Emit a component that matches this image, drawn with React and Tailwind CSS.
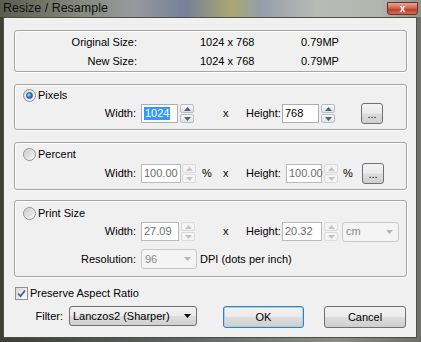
import React from "react";

const btnBg =
  "bg-[linear-gradient(#f2f2f2,#ebebeb_48%,#dddddd_52%,#cfcfcf)]";

function Radio({ checked }) {
  return (
    <span className="flex h-[13px] w-[13px] items-center justify-center rounded-full border border-[#8e8f8f] bg-gradient-to-br from-[#d8d8d8] to-[#fbfbfb]">
      {checked ? (
        <span className="h-[7px] w-[7px] rounded-full border border-[#1b4f8a] bg-[radial-gradient(circle_at_35%_35%,#9be6ff,#2a84d0_55%,#0d3f86)]" />
      ) : (
        <span className="h-[9px] w-[9px] rounded-full bg-gradient-to-br from-[#cbcbcb] to-[#f4f4f4]" />
      )}
    </span>
  );
}

function Spin({ disabled }) {
  const fill = disabled ? "#c4c4c4" : "#4d6185";
  const box = disabled
    ? "border-[#dadada] bg-[#f4f4f4]"
    : "border-[#b6bdc7] bg-gradient-to-b from-[#f8f8f8] to-[#e2e2e2]";
  return (
    <div className="flex w-[14px] flex-col gap-[1px]">
      <div className={`flex h-[9px] items-center justify-center rounded-[2px] border ${box}`}>
        <svg width="7" height="4" viewBox="0 0 7 4">
          <path d="M0 4L3.5 0L7 4Z" fill={fill} />
        </svg>
      </div>
      <div className={`flex h-[9px] items-center justify-center rounded-[2px] border ${box}`}>
        <svg width="7" height="4" viewBox="0 0 7 4">
          <path d="M0 0L3.5 4L7 0Z" fill={fill} />
        </svg>
      </div>
    </div>
  );
}

function Field({ value, w, disabled, selected }) {
  return (
    <div
      className={`flex h-[19px] items-center border bg-white pl-[2px] ${w} ${
        disabled ? "border-[#b9b9b9] text-[#6d6d6d]" : "border-[#abadb3]"
      }`}
    >
      {selected ? (
        <span className="bg-[#3399ff] px-[1px] leading-[13px] text-white">{value}</span>
      ) : (
        <span>{value}</span>
      )}
    </div>
  );
}

function Combo({ value, w, disabled }) {
  return (
    <div
      className={`flex h-[20px] items-center justify-between rounded-[3px] border pl-[3px] pr-[5px] ${w} ${
        disabled
          ? "border-[#c9c9c9] bg-[#f4f4f4] text-[#8a8a8a]"
          : "border-[#707070] " + btnBg
      }`}
    >
      <span>{value}</span>
      <svg width="7" height="4" viewBox="0 0 7 4">
        <path d="M0 0H7L3.5 4Z" fill={disabled ? "#b4b4b4" : "#000"} />
      </svg>
    </div>
  );
}

function Dots() {
  return (
    <div className={`ml-[26px] flex h-[21px] w-[22px] items-end justify-center rounded-[3px] border border-[#707070] pb-[3px] leading-none ${btnBg}`}>
      ...
    </div>
  );
}

const group =
  "w-[393px] rounded-[3px] border border-[#a5a5a5] shadow-[inset_1px_1px_0_#fff,1px_1px_0_#fff]";

export default function App() {
  return (
    <div className="h-[342px] w-[421px] overflow-hidden bg-[linear-gradient(90deg,#3e3f35,#5c6062_40%,#8a8c84_80%,#6e6f68)] font-['Liberation_Sans',Arial,sans-serif] text-[11px] text-black">
      {/* Title bar */}
      <div className="flex h-[17px] items-start justify-between bg-[linear-gradient(90deg,#5a5c50_0%,#84877a_18%,#979a9c_32%,#74809a_44%,#aaa870_55%,#959eaa_62%,#b8bbb6_75%,#b3b5af_90%,#90928c_100%)]">
        <span className="pl-[3px] pt-[1px] text-[12.5px] leading-[15px] text-[#101010]">
          Resize / Resample
        </span>
        <div className="mr-[3px] mt-[2px] flex h-[13px] w-[31px] items-center justify-center rounded-b-[3px] border border-[#6a3026] bg-[linear-gradient(#e8a89a,#cf5e4a_50%,#bb3a24_55%,#d46c55)] text-[10px] font-bold leading-none text-white">
          x
        </div>
      </div>

      {/* Client area */}
      <div className="ml-[3px] h-[321px] w-[414px] border border-[#4e4e46] bg-[#f0f0f0] pl-[10px] pt-[12px]">
        {/* Sizes */}
        <div className={`${group} pt-[1px]`}>
          <div className="flex h-[20px] items-center">
            <span className="w-[122px] text-right">Original Size:</span>
            <span className="ml-[63px] w-[101px]">1024 x 768</span>
            <span>0.79MP</span>
          </div>
          <div className="flex h-[19px] items-center">
            <span className="w-[122px] text-right">New Size:</span>
            <span className="ml-[63px] w-[101px]">1024 x 768</span>
            <span>0.79MP</span>
          </div>
        </div>

        {/* Pixels */}
        <div className={`${group} mt-[12px] pb-[6px] pt-[4px]`}>
          <div className="flex h-[13px] items-center pl-[8px]">
            <Radio checked />
            <span className="ml-[2px]">Pixels</span>
          </div>
          <div className="mt-[2px] flex h-[19px] items-center">
            <span className="w-[121px] text-right">Width:</span>
            <div className="ml-[5px]">
              <Field value="1024" w="w-[37px]" selected />
            </div>
            <div className="ml-[2px]">
              <Spin />
            </div>
            <span className="w-[52px] pl-[29px]">x</span>
            <span className="w-[36px]">Height:</span>
            <Field value="768" w="w-[37px]" />
            <div className="ml-[2px]">
              <Spin />
            </div>
            <Dots />
          </div>
        </div>

        {/* Percent */}
        <div className={`${group} mt-[12px] pb-[6px] pt-[5px]`}>
          <div className="flex h-[13px] items-center pl-[8px]">
            <Radio />
            <span className="ml-[2px]">Percent</span>
          </div>
          <div className="mt-[3px] flex h-[19px] items-center">
            <span className="w-[121px] text-right">Width:</span>
            <div className="ml-[5px]">
              <Field value="100.00" w="w-[40px]" disabled />
            </div>
            <div className="ml-[1px]">
              <Spin disabled />
            </div>
            <span className="ml-[6px] w-[21px]">%</span>
            <span className="w-[23px]">x</span>
            <span className="w-[40px]">Height:</span>
            <Field value="100.00" w="w-[36px]" disabled />
            <div className="ml-[2px]">
              <Spin disabled />
            </div>
            <span className="ml-[5px] w-[19px]">%</span>
            <div className="-ml-[26px]">
              <Dots />
            </div>
          </div>
        </div>

        {/* Print size */}
        <div className={`${group} mt-[10px] pb-[7px] pt-[6px]`}>
          <div className="flex h-[13px] items-center pl-[8px]">
            <Radio />
            <span className="ml-[2px]">Print Size</span>
          </div>
          <div className="mt-[2px] flex h-[19px] items-center">
            <span className="w-[121px] text-right">Width:</span>
            <div className="ml-[5px]">
              <Field value="27.09" w="w-[38px]" disabled />
            </div>
            <div className="ml-[2px]">
              <Spin disabled />
            </div>
            <span className="w-[51px] pl-[28px]">x</span>
            <span className="w-[36px]">Height:</span>
            <Field value="20.32" w="w-[40px]" disabled />
            <div className="ml-[2px]">
              <Spin disabled />
            </div>
            <div className="ml-[4px]">
              <Combo value="cm" w="w-[57px]" disabled />
            </div>
          </div>
          <div className="mt-[8px] flex h-[20px] items-center">
            <span className="w-[121px] text-right">Resolution:</span>
            <div className="ml-[5px]">
              <Combo value="96" w="w-[56px]" disabled />
            </div>
            <span className="ml-[3px]">DPI (dots per inch)</span>
          </div>
        </div>

        {/* Aspect ratio */}
        <div className="ml-[1px] mt-[10px] flex h-[13px] items-center">
          <span className="flex h-[13px] w-[13px] items-center justify-center border border-[#8e8f8f] bg-gradient-to-br from-[#d6d6d6] to-white">
            <svg width="9" height="9" viewBox="0 0 9 9">
              <path d="M1 4.5L3.5 7.2L8 1.5" stroke="#4a5f97" strokeWidth="1.8" fill="none" />
            </svg>
          </span>
          <span className="ml-[2px]">Preserve Aspect Ratio</span>
        </div>

        {/* Filter + buttons */}
        <div className="mt-[6px] flex items-start">
          <span className="flex h-[20px] w-[49px] items-center justify-end">Filter:</span>
          <div className="ml-[6px]">
            <Combo value="Lanczos2 (Sharper)" w="w-[128px]" />
          </div>
          <div className={`ml-[26px] flex h-[22px] w-[81px] items-center justify-center rounded-[3px] border border-[#3c7fb1] shadow-[inset_0_0_0_1px_#9fd5f4] ${btnBg}`}>
            OK
          </div>
          <div className={`ml-[20px] flex h-[22px] w-[82px] items-center justify-center rounded-[3px] border border-[#707070] ${btnBg}`}>
            Cancel
          </div>
        </div>
      </div>
    </div>
  );
}
